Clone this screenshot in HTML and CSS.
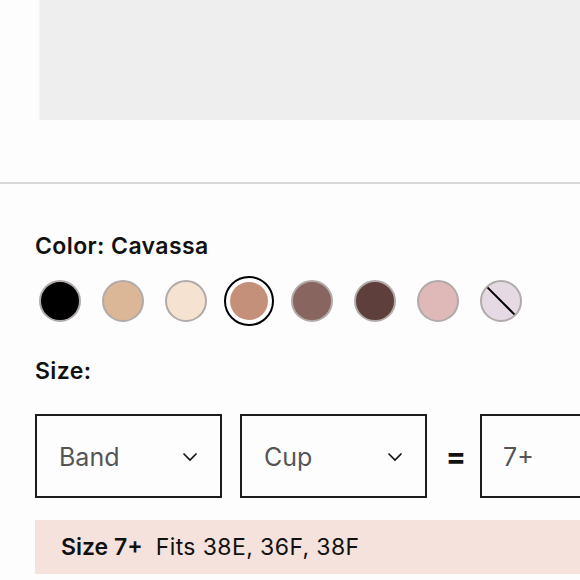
FILE: index.html
```html
<!DOCTYPE html>
<html>
<head>
<meta charset="utf-8">
<link rel="stylesheet" href="styles.css">
</head>
<body>
<div class="hero"></div>
<hr class="divider">
<section class="panel">
  <h2 class="label">Color: Cavassa</h2>
  <div class="swatches">
    <span class="swatch" style="background:#000000"></span>
    <span class="swatch" style="background:#dcb797"></span>
    <span class="swatch" style="background:#f6e2d1"></span>
    <span class="swatch selected"><span class="inner" style="background:#c49079"></span></span>
    <span class="swatch" style="background:#88655e"></span>
    <span class="swatch" style="background:#5e3f3b"></span>
    <span class="swatch" style="background:#dfb8b8"></span>
    <span class="swatch none" style="background:#e5dae4"></span>
  </div>
  <h2 class="label size-label">Size:</h2>
  <div class="size-row">
    <div class="select">
      <span>Band</span>
      <svg class="chev" width="16" height="10" viewBox="0 0 16 10"><path d="M1.5 1.5 L8 8 L14.5 1.5" fill="none" stroke="#111" stroke-width="1.6"/></svg>
    </div>
    <div class="select">
      <span>Cup</span>
      <svg class="chev" width="16" height="10" viewBox="0 0 16 10"><path d="M1.5 1.5 L8 8 L14.5 1.5" fill="none" stroke="#111" stroke-width="1.6"/></svg>
    </div>
    <div class="equals">=</div>
    <div class="result"><span>7+</span></div>
  </div>
  <div class="banner"><b>Size 7+</b><span class="fits">Fits 38E, 36F, 38F</span></div>
</section>
</body>
</html>
```
FILE: styles.css
```css
html, body {
  margin: 0;
  padding: 0;
  background: #fdfdfd;
  overflow: hidden;
}
body {
  width: 580px;
  height: 580px;
  font-family: Inter, "Liberation Sans", sans-serif;
  color: #111;
}
.hero {
  margin-left: 39px;
  height: 120px;
  background: #eeeeee;
  border-left: 1px solid #f4f4f4;
}
.divider {
  margin: 62px 0 0 0;
  border: 0;
  height: 2px;
  background: #d8d8d8;
}
.panel {
  padding-left: 35px;
}
.label {
  margin: 0;
  font-size: 23px;
  font-weight: 600;
  line-height: 26px;
  letter-spacing: 0.4px;
}
.panel > .label:first-child {
  margin-top: 49px;
}
.swatches {
  display: flex;
  align-items: center;
  gap: 21px;
  margin-top: 17px;
  margin-left: 4px;
  height: 50px;
}
.swatch {
  width: 38px;
  height: 38px;
  border-radius: 50%;
  border: 2px solid #b0aaa8;
  flex: none;
  position: relative;
  overflow: hidden;
}
.swatch.selected {
  width: 46px;
  height: 46px;
  border: 2px solid #000;
  background: #fff;
  display: flex;
  align-items: center;
  justify-content: center;
  margin: 0 -4px;
}
.swatch .inner {
  width: 38px;
  height: 38px;
  border-radius: 50%;
}
.swatch.none::after {
  content: "";
  position: absolute;
  left: 50%;
  top: 50%;
  width: 42px;
  height: 2px;
  background: #000;
  transform: translate(-50%, -50%) rotate(45deg);
}
.size-label {
  margin-top: 32px;
}
.size-row {
  display: flex;
  align-items: center;
  margin-top: 30px;
  height: 84px;
}
.select, .result {
  box-sizing: border-box;
  height: 84px;
  border: 2px solid #1c1c1c;
  display: flex;
  align-items: center;
  justify-content: space-between;
  padding: 0 22px 0 22px;
  font-size: 25px;
  color: #555;
  flex: none;
}
.select {
  width: 187px;
  margin-right: 18px;
}
.select span, .result span {
  margin-top: 1px;
}
.chev {
  margin-top: 2px;
}
.equals {
  width: 22px;
  font-size: 30px;
  font-weight: 700;
  color: #111;
  text-align: center;
  margin-right: 13px;
}
.result {
  flex: 1;
  border-right: 0;
  padding-left: 21px;
}
.banner {
  margin-top: 22px;
  background: #f5e2dc;
  height: 54px;
  display: flex;
  align-items: center;
  padding-left: 26px;
  font-size: 23px;
  letter-spacing: 0.4px;
  color: #111;
}
.banner b {
  font-weight: 600;
  letter-spacing: 0;
}
.fits {
  margin-left: 13px;
}
```
